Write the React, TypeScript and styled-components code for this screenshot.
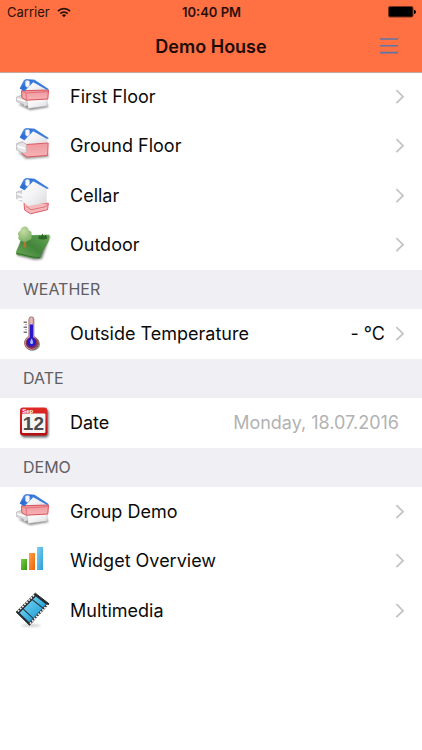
import React from "react";
import styled, { createGlobalStyle } from "styled-components";

const GlobalStyle = createGlobalStyle`
  *, *::before, *::after { box-sizing: border-box; }
  body {
    margin: 0;
    background: #ffffff;
    color: #0b0b0b;
    font-family: Inter, Roboto, "Liberation Sans", sans-serif;
  }
`;

const Screen = styled.div`
  min-height: 100vh;
  background: #ffffff;
`;

const Header = styled.header`
  position: relative;
  height: 72px;
  background: #ff7043;
  box-shadow: 0 1px 0 #c9a79c;
`;

const StatusBar = styled.div`
  display: grid;
  grid-template-columns: 1fr auto 1fr;
  align-items: center;
  height: 24px;
  padding: 0 6px 0 7px;
  font-size: 13px;
  line-height: 24px;
  color: #2b1009;
`;

const Carrier = styled.div`
  display: flex;
  align-items: center;
  gap: 7px;
`;

const Clock = styled.time`
  font-weight: 600;
`;

const Battery = styled.svg`
  justify-self: end;
`;

const NavBar = styled.div`
  display: grid;
  grid-template-columns: 1fr auto 1fr;
  align-items: center;
  height: 46px;
  padding: 0 19px;
`;

const Title = styled.h1`
  grid-column: 2;
  margin: 0;
  font-size: 18px;
  font-weight: 600;
  line-height: 24px;
  color: #1c0b06;
`;

const MenuButton = styled.button`
  justify-self: end;
  display: flex;
  padding: 5px;
  border: 0;
  background: none;
  cursor: pointer;
`;

const SectionTitle = styled.h2`
  height: 39px;
  margin: 0;
  padding: 0 23px;
  background: #efeff4;
  color: #5e5e63;
  font-size: 16px;
  font-weight: 400;
  line-height: 38px;
`;

const List = styled.ul`
  margin: 0;
  padding: 0;
  list-style: none;
`;

const Item = styled.li`
  height: 49px;

  &:nth-child(even),
  &:only-child {
    height: 50px;
  }
`;

const Row = styled.div`
  display: flex;
  align-items: center;
  height: 100%;
  padding: 0 17px 0 15px;
  color: inherit;
  text-decoration: none;
`;

const Label = styled.span`
  flex: 1;
  padding-left: 19px;
  font-size: 18px;
  line-height: 24px;
`;

const Value = styled.span<{ $muted?: boolean }>`
  margin-right: ${(p) => (p.$muted ? "6px" : "10px")};
  font-size: 18px;
  line-height: 24px;
  color: ${(p) => (p.$muted ? "#b2b2b2" : "inherit")};
`;

const Picture = styled.svg`
  flex: none;
  width: 36px;
  height: 36px;
  overflow: visible;
`;

const Chevron = () => (
  <svg width="10" height="16" viewBox="0 0 10 16" fill="none" aria-hidden="true">
    <path d="M1.4 1.2 8 7.7 1.4 14.2" stroke="#c3c3c8" strokeWidth="1.8" />
  </svg>
);

const Wifi = () => (
  <svg width="14" height="11" viewBox="0 0 15 11" fill="none" stroke="#2b1009" strokeWidth="1.9" aria-hidden="true">
    <path d="M1 4.1a9.2 9.2 0 0 1 13 0" />
    <path d="M3.5 6.7a5.7 5.7 0 0 1 8 0" />
    <path d="M7.5 10.6 5.3 8.4a3.2 3.2 0 0 1 4.4 0z" fill="#2b1009" stroke="none" />
  </svg>
);

type Floor = "first" | "ground" | "cellar";

const Roof = ({ id }: { id: string }) => (
  <g>
    <defs>
      <linearGradient id={`${id}-roof`} x1="0" y1="0" x2="1" y2="1">
        <stop offset="0" stopColor="#78aef2" />
        <stop offset="0.45" stopColor="#2a6bd2" />
        <stop offset="1" stopColor="#4486e4" />
      </linearGradient>
    </defs>
    <path d="M8.8 1.2 11 0 19.6.8 9.4 12.2 4.6 9.6z" fill={`url(#${id}-roof)`} />
    <path d="M16.6 1.4 19.6.8 34 10.2 32 11 18.2 3.2 9.4 12.2 9 10.6z" fill="#3c7bdb" />
    <path d="M10.4 2.4q2-1.7 4.2 0v4.2l-2.1 1.8-2.1-1.4z" fill="#f6f7fa" stroke="#c2c9d8" strokeWidth=".5" />
  </g>
);

const HouseIcon = ({ floor, id }: { floor: Floor; id: string }) => (
  <Picture viewBox="0 0 36 36" aria-hidden="true">
    <defs>
      <linearGradient id={`${id}-wall`} x1="0" y1="0" x2="1" y2="1">
        <stop offset="0" stopColor="#ffffff" />
        <stop offset=".5" stopColor="#f3f3f5" />
        <stop offset="1" stopColor="#d9dade" />
      </linearGradient>
      <linearGradient id={`${id}-red`} x1="0" y1="0" x2="0" y2="1">
        <stop offset="0" stopColor="#ee989d" />
        <stop offset="1" stopColor="#f6b3b6" />
      </linearGradient>
      <filter id={`${id}-soft`} x="-20%" y="-60%" width="140%" height="220%">
        <feGaussianBlur stdDeviation="1.1" />
      </filter>
    </defs>
    {floor === "first" && (
      <g>
        <path d="M3 25 15 31 33.5 28 31 24z" fill="#555" opacity=".75" filter={`url(#${id}-soft)`} />
        <path d="M1.6 18 8 15.8 13 20v6.5L9 27.8 8.2 25 1.6 22.6z" fill="#dcdcdf" stroke="#a9a9ae" strokeWidth=".6" />
        <path d="M2.2 19.8 10 22.4" stroke="#fff" strokeWidth="1.5" />
        <path d="M11.8 20.5 32.3 19.5 32 27 13.2 29.6z" fill={`url(#${id}-wall)`} stroke="#b4b4b9" strokeWidth=".5" />
        <path d="M9.5 12 18.2 3 32 11.6z" fill={`url(#${id}-wall)`} />
        <path d="M6.6 11.8 33.5 11 32.8 20 11.3 21.2 6.8 18.6z" fill={`url(#${id}-red)`} stroke="#dd5159" strokeWidth="1" />
        <path d="M6.8 12 11.2 14 33 12.6M11.2 14 11.3 21" fill="none" stroke="#e06a71" strokeWidth=".9" />
      </g>
    )}
    {floor === "ground" && (
      <g>
        <path d="M3 24 11 31 34 29 32 24z" fill="#555" opacity=".6" filter={`url(#${id}-soft)`} />
        <path d="M1.6 15.6 8 13.4 12 15.2v9l-4 .6-6.4-3z" fill="#dcdcdf" stroke="#a9a9ae" strokeWidth=".6" />
        <path d="M2.2 17.4 10 19.8" stroke="#fff" strokeWidth="1.6" />
        <path d="M7 10.5 18.2 3 32.4 11v4.4L11.5 16.6 7 14z" fill={`url(#${id}-wall)`} />
        <path d="M7 14 11.3 16.5 33.2 15 32.6 27.4 12 29 7.5 26z" fill={`url(#${id}-red)`} stroke="#dd5159" strokeWidth=".9" />
        <path d="M1.8 16 8 14 11.3 16.5v8L8 25 1.8 22z" fill="#e5e5e8" stroke="#b5b5ba" strokeWidth=".5" />
        <path d="M2.2 18.2 10 20.6" stroke="#fff" strokeWidth="1.6" />
      </g>
    )}
    {floor === "cellar" && (
      <g>
        <path d="M9 25.2 13.5 24 33.4 25.3 32.5 31.7 15.6 35.8 9.6 32z" fill="#f4b9bc" stroke="#dc5e65" strokeWidth="1" />
        <path d="M11 28.2 16 31.8 31 28.6 32.4 26.2" fill="none" stroke="#dd6c72" strokeWidth=".9" />
        <path d="M1.6 14 8 12.2 14 15.5v9.3L8.2 24 1.6 20.8z" fill="#d5d6da" stroke="#b0b1b6" strokeWidth=".6" />
        <path d="M2 15.8 9 17.6M2.6 20.8 9 21.6" stroke="#fff" strokeWidth="1.7" />
        <path d="M7.2 10.5 18.2 3 31.8 11.2 31.6 24.4 13.5 28 7.2 23.6z" fill={`url(#${id}-wall)`} />
      </g>
    )}
    <Roof id={id} />
  </Picture>
);

const OutdoorIcon = () => (
  <Picture viewBox="0 0 36 36" aria-hidden="true">
    <defs>
      <linearGradient id="lawn" x1="0" y1="1" x2="1" y2="0">
        <stop offset="0" stopColor="#70ad57" />
        <stop offset=".5" stopColor="#42853c" />
        <stop offset="1" stopColor="#66a852" />
      </linearGradient>
      <radialGradient id="crown" cx=".4" cy=".3" r=".8">
        <stop offset="0" stopColor="#c4dca2" />
        <stop offset="1" stopColor="#76ad60" />
      </radialGradient>
      <filter id="lawn-soft"><feGaussianBlur stdDeviation=".8" /></filter>
    </defs>
    <path d="M7 10 35 9 27 32 20 33 2 28.6z" fill="#333" opacity=".6" filter="url(#lawn-soft)" />
    <path d="M6.3 8.5 33.8 7.8Q35 8 34.5 10.5C33.5 18 28 21 26 30q-.5 2-2.5 1.8C15 31.5 9 28.5 2.3 28.2Q.5 27 1.2 24.5C2.5 20.5 6.5 15 6.3 8.5z" fill="url(#lawn)" />
    <path d="M1.4 26.5C8 26.8 15 30.8 25 30.5" stroke="#376f33" strokeWidth="1.1" fill="none" />
    <path d="M9 13h2l.3 7.4H8.4z" fill="#b8732f" />
    <path d="M9.5-.4C12.5-.8 13.7 2 13.9 3.6 16.7 4 17.2 6.8 16.2 8.3 18 11 15.5 13.6 13 13.4 11 15.5 7.5 15 6.3 13.5 3.5 13.4 2.6 10.8 3.8 9 2 7 3.8 4 5.4 3.7 5.6 1.8 7 .1 9.5-.4z" fill="url(#crown)" />
    <path d="M23 11.5 24.5 8.2 26 9.5 27.5 6.6 29 9.4 31 7.5 32.4 11.5q-4.5 2-9.4 0z" fill="#2b6729" />
  </Picture>
);

const ThermometerIcon = () => (
  <Picture viewBox="0 0 36 36" aria-hidden="true">
    <defs>
      <linearGradient id="tube" x1="0" y1="0" x2="1" y2="0">
        <stop offset="0" stopColor="#cf9297" />
        <stop offset=".5" stopColor="#e2babd" />
        <stop offset="1" stopColor="#8b4b51" />
      </linearGradient>
      <filter id="bulb-soft"><feGaussianBlur stdDeviation=".7" /></filter>
    </defs>
    <ellipse cx="17.5" cy="28" rx="7.5" ry="6.8" fill="#555" opacity=".7" filter="url(#bulb-soft)" />
    <path d="M13.9 3.2Q14 .8 16.4.8T18.9 3.2V20.4A7 7 0 1 1 13.9 20.4z" fill="url(#tube)" stroke="#8d5559" strokeWidth=".7" />
    <path d="M14.6 21.4a6 6 0 1 0 4 0" fill="#85304a" />
    <path d="M14.8 8.5h3.2v13C20.4 23 21.4 25 21 27a4.7 4.7 0 0 1-9.2 0C11.6 25 12.6 23 14.8 21.5z" fill="#2b18c9" />
    <path d="M16.6 22.5c2 3 2 5.5 0 5.5s-2-2.5 0-5.5z" fill="#a7b8ff" />
    <path d="M8.6 6.2H12M8.6 11.2H12M8.6 16.2H12" stroke="#777" strokeWidth="1.5" />
    <path d="M9.8 8.7H12M9.8 13.7H12" stroke="#aaa" strokeWidth="1" />
  </Picture>
);

const CalendarIcon = () => (
  <Picture viewBox="0 0 36 36" aria-hidden="true">
    <defs>
      <linearGradient id="binding" x1="0" y1="0" x2="0" y2="1">
        <stop offset="0" stopColor="#de2a27" />
        <stop offset="1" stopColor="#b80d10" />
      </linearGradient>
      <filter id="calendar-soft"><feGaussianBlur stdDeviation=".8" /></filter>
    </defs>
    <rect x="6.5" y="4.5" width="27" height="28" rx="3" fill="#444" opacity=".8" filter="url(#calendar-soft)" />
    <rect x="5" y="2.4" width="27.4" height="28.2" rx="3" fill="url(#binding)" />
    <rect x="7" y="8.6" width="23.4" height="19.4" rx="1" fill="#f6f5f5" />
    <text x="7.2" y="7.6" fontSize="6" fontWeight="700" fontFamily="Liberation Sans, sans-serif" fill="#fff">Sep</text>
    <text x="18.4" y="24.7" fontSize="19" fontWeight="700" textAnchor="middle" fontFamily="Liberation Sans, sans-serif" fill="#4b4b4b">12</text>
  </Picture>
);

const ChartIcon = () => (
  <Picture viewBox="0 0 36 36" aria-hidden="true">
    <defs>
      <linearGradient id="bar-green" x1="0" y1="0" x2="1" y2="1"><stop stopColor="#77cf43" /><stop offset="1" stopColor="#35940f" /></linearGradient>
      <linearGradient id="bar-orange" x1="0" y1="0" x2="1" y2="1"><stop stopColor="#ffa047" /><stop offset="1" stopColor="#e96308" /></linearGradient>
      <linearGradient id="bar-blue" x1="0" y1="0" x2="1" y2="1"><stop stopColor="#7fd0f1" /><stop offset="1" stopColor="#2a9ed6" /></linearGradient>
    </defs>
    <rect x="6" y="16" width="6" height="11" fill="url(#bar-green)" />
    <rect x="14" y="10" width="6" height="17" fill="url(#bar-orange)" />
    <rect x="22" y="4" width="6" height="23" fill="url(#bar-blue)" />
  </Picture>
);

const FilmIcon = () => (
  <Picture viewBox="0 0 36 36" aria-hidden="true">
    <defs>
      <linearGradient id="frame" x1="0" y1="0" x2="1" y2="1"><stop stopColor="#6fd0f2" /><stop offset="1" stopColor="#1f9dd4" /></linearGradient>
      <filter id="film-soft" x="-20%" y="-100%" width="140%" height="300%"><feGaussianBlur stdDeviation="1" /></filter>
    </defs>
    <ellipse cx="16" cy="32.5" rx="10" ry="1.5" fill="#888" opacity=".4" filter="url(#film-soft)" />
    <path d="M20.3.2 34 10.8 14.5 32.2 1.2 19z" fill="#262b2e" stroke="#262b2e" strokeWidth="1" strokeLinejoin="round" />
    <path d="M19 2.2 2.8 18.4" stroke="#f2f2f2" strokeWidth="1.8" strokeDasharray="1.8 1.2" />
    <path d="M32.6 11.8 14.8 30.9" stroke="#f2f2f2" strokeWidth="1.8" strokeDasharray="1.8 1.2" />
    <path d="M20.8 3.4 31 11.2 28 14.5 17.9 6.5z" fill="url(#frame)" />
    <path d="M17.2 7.2 27.4 15.2 18.4 24.9 8.7 15.7z" fill="url(#frame)" />
    <path d="M8 16.4 17.7 25.6 14.2 29.3 4.6 19.9z" fill="url(#frame)" />
  </Picture>
);

interface RowProps {
  icon: React.ReactNode;
  label: string;
  value?: string;
}

const LinkRow = ({ icon, label, value }: RowProps) => (
  <Item>
    <Row as="a" {...{ href: "#" }}>
      {icon}
      <Label>{label}</Label>
      {value && <Value>{value}</Value>}
      <Chevron />
    </Row>
  </Item>
);

export default function App() {
  return (
    <Screen>
      <GlobalStyle />
      <Header>
        <StatusBar>
          <Carrier>
            Carrier
            <Wifi />
          </Carrier>
          <Clock>10:40 PM</Clock>
          <Battery width="28" height="12" viewBox="0 0 28 12" role="img" aria-label="Battery full">
            <rect x=".5" y=".5" width="24.5" height="10.5" rx="1.5" fill="#000" stroke="#7c2f18" />
            <path d="M26 3.8q2 .6 2 2.2t-2 2.2z" fill="#000" />
          </Battery>
        </StatusBar>
        <NavBar>
          <Title>Demo House</Title>
          <MenuButton type="button" aria-label="Menu">
            <svg width="18" height="18" viewBox="0 0 18 18" stroke="#5f74a8" strokeWidth="1.6" aria-hidden="true">
              <path d="M0 1H18M0 7.7H18M0 14.6H18" />
            </svg>
          </MenuButton>
        </NavBar>
      </Header>
      <main>
        <List>
          <LinkRow icon={<HouseIcon floor="first" id="first" />} label="First Floor" />
          <LinkRow icon={<HouseIcon floor="ground" id="ground" />} label="Ground Floor" />
          <LinkRow icon={<HouseIcon floor="cellar" id="cellar" />} label="Cellar" />
          <LinkRow icon={<OutdoorIcon />} label="Outdoor" />
        </List>
        <SectionTitle>WEATHER</SectionTitle>
        <List>
          <LinkRow icon={<ThermometerIcon />} label="Outside Temperature" value="- °C" />
        </List>
        <SectionTitle>DATE</SectionTitle>
        <List>
          <Item>
            <Row>
              <CalendarIcon />
              <Label>Date</Label>
              <Value $muted>Monday, 18.07.2016</Value>
            </Row>
          </Item>
        </List>
        <SectionTitle>DEMO</SectionTitle>
        <List>
          <LinkRow icon={<HouseIcon floor="first" id="group" />} label="Group Demo" />
          <LinkRow icon={<ChartIcon />} label="Widget Overview" />
          <LinkRow icon={<FilmIcon />} label="Multimedia" />
        </List>
      </main>
    </Screen>
  );
}
